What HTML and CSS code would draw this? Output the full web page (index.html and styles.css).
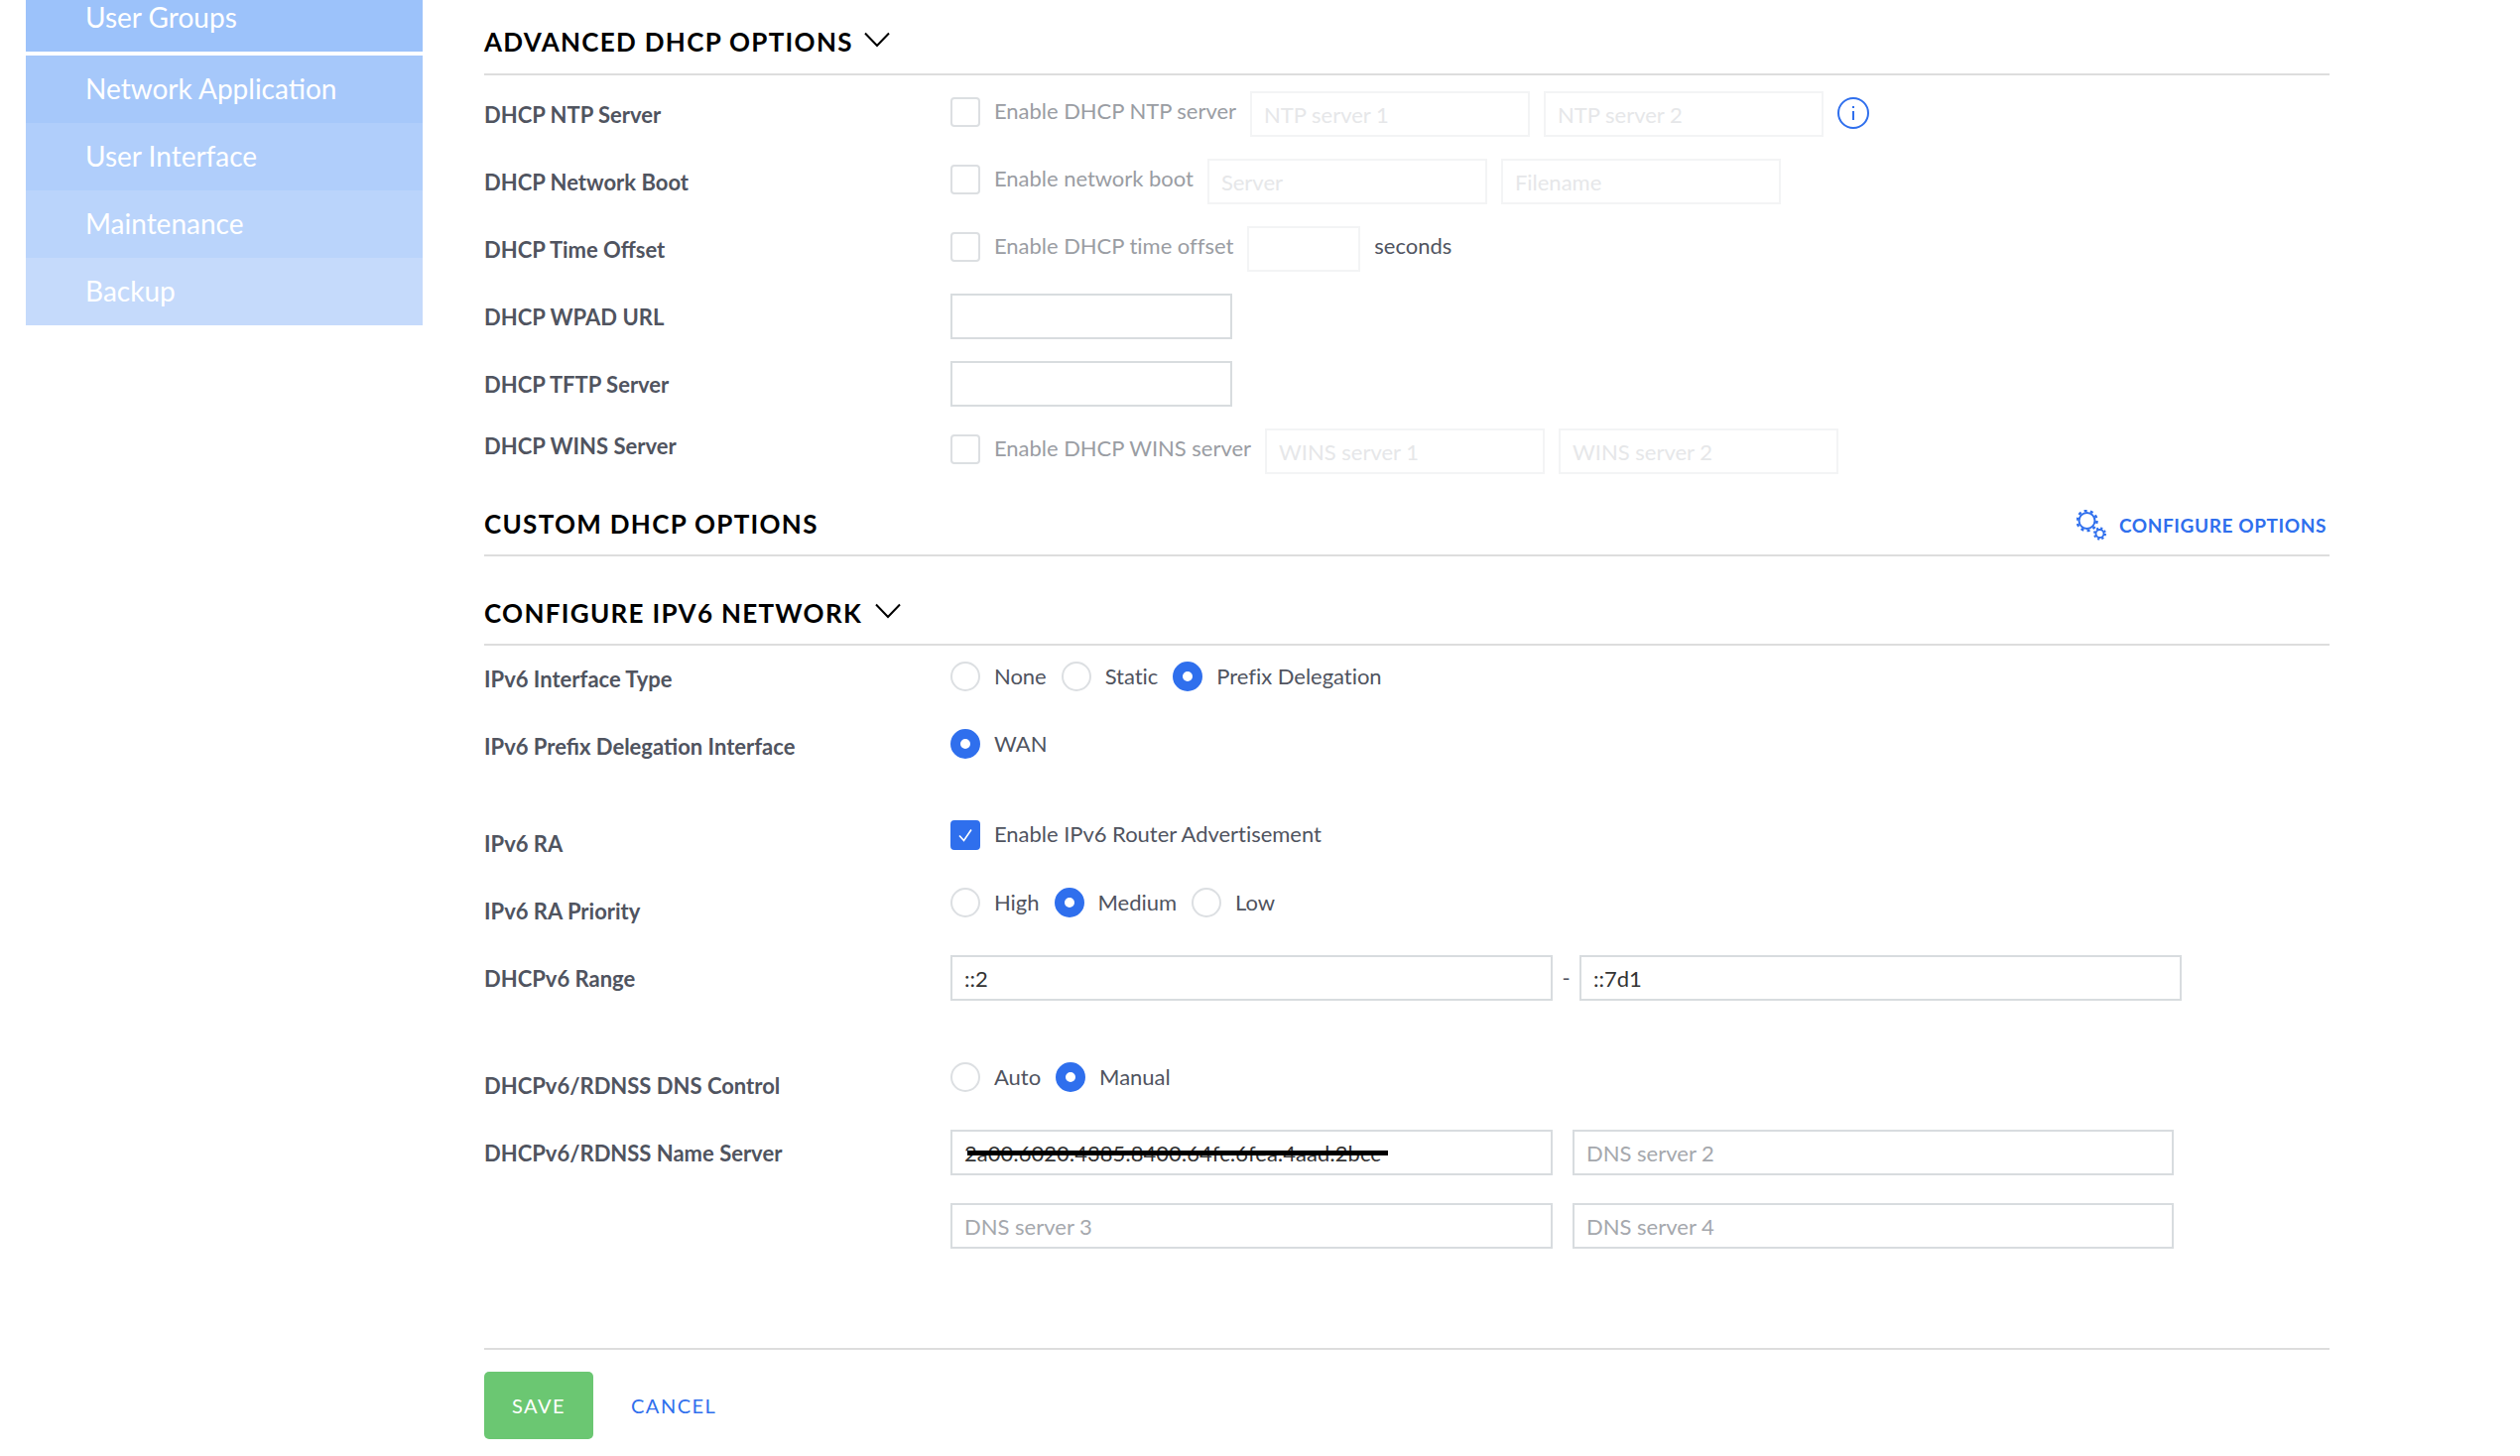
FILE: index.html
```html
<!DOCTYPE html>
<html lang="en">

<head>
    <meta charset="UTF-8" />
    <title>Network Settings</title>
    <link rel="stylesheet" href="styles.css">
</head>

<body>
    <div class="page">
        <nav class="sidebar">
            <a class="nav-item nav-first">User Groups</a>
            <a class="nav-item nav-2">Network Application</a>
            <a class="nav-item nav-3">User Interface</a>
            <a class="nav-item nav-4">Maintenance</a>
            <a class="nav-item nav-5">Backup</a>
        </nav>

        <main class="content">
            <!-- Advanced DHCP -->
            <div class="section-head head-advanced">
                <h2>ADVANCED DHCP OPTIONS</h2>
                <svg class="chevron" viewBox="0 0 26 16"><path d="M1 1.5 13 14 25 1.5" /></svg>
            </div>

            <div class="row">
                <div class="row-label">DHCP NTP Server</div>
                <div class="controls">
                    <label class="option off"><span class="check"></span>Enable DHCP NTP server</label>
                    <input class="field field-sm faded" placeholder="NTP server 1">
                    <input class="field field-sm faded" placeholder="NTP server 2">
                    <svg class="info" viewBox="0 0 32 32">
                        <circle cx="16" cy="16" r="15" />
                        <path d="M16 14v9M16 9v2" />
                    </svg>
                </div>
            </div>
            <div class="row">
                <div class="row-label">DHCP Network Boot</div>
                <div class="controls">
                    <label class="option off"><span class="check"></span>Enable network boot</label>
                    <input class="field field-sm faded" placeholder="Server">
                    <input class="field field-sm faded" placeholder="Filename">
                </div>
            </div>
            <div class="row">
                <div class="row-label">DHCP Time Offset</div>
                <div class="controls">
                    <label class="option off"><span class="check"></span>Enable DHCP time offset</label>
                    <input class="field field-xs faded">
                    <span class="unit">seconds</span>
                </div>
            </div>
            <div class="row">
                <div class="row-label">DHCP WPAD URL</div>
                <div class="controls"><input class="field field-url"></div>
            </div>
            <div class="row">
                <div class="row-label">DHCP TFTP Server</div>
                <div class="controls"><input class="field field-url"></div>
            </div>
            <div class="row row-wins">
                <div class="row-label label-up">DHCP WINS Server</div>
                <div class="controls">
                    <label class="option off"><span class="check"></span>Enable DHCP WINS server</label>
                    <input class="field field-sm faded" placeholder="WINS server 1">
                    <input class="field field-sm faded" placeholder="WINS server 2">
                </div>
            </div>

            <!-- Custom DHCP -->
            <div class="section-head head-custom">
                <h2>CUSTOM DHCP OPTIONS</h2>
                <a class="configure">
                    <svg class="gears" viewBox="0 0 32 32">
                        <circle class="gear-ring" cx="10.5" cy="11" r="8" />
                        <circle class="gear-teeth" cx="10.5" cy="11" r="10" />
                        <circle class="gear-ring small" cx="23.5" cy="24" r="4" />
                        <circle class="gear-teeth small" cx="23.5" cy="24" r="5.5" />
                    </svg>
                    CONFIGURE OPTIONS
                </a>
            </div>

            <!-- IPv6 -->
            <div class="section-head head-ipv6">
                <h2>CONFIGURE IPV6 NETWORK</h2>
                <svg class="chevron" viewBox="0 0 26 16"><path d="M1 1.5 13 14 25 1.5" /></svg>
            </div>

            <div class="row">
                <div class="row-label">IPv6 Interface Type</div>
                <div class="controls controls-radio">
                    <label class="option"><span class="radio"></span>None</label>
                    <label class="option"><span class="radio"></span>Static</label>
                    <label class="option"><span class="radio on"></span>Prefix Delegation</label>
                </div>
            </div>
            <div class="row row-92">
                <div class="row-label">IPv6 Prefix Delegation Interface</div>
                <div class="controls controls-radio">
                    <label class="option"><span class="radio on"></span>WAN</label>
                </div>
            </div>
            <div class="row">
                <div class="row-label label-down">IPv6 RA</div>
                <div class="controls">
                    <label class="option"><span class="check on"><svg viewBox="0 0 30 30"><path d="M9 15.5l4.5 5L21 9.5" /></svg></span>Enable IPv6 Router Advertisement</label>
                </div>
            </div>
            <div class="row row-74">
                <div class="row-label label-down">IPv6 RA Priority</div>
                <div class="controls controls-radio">
                    <label class="option"><span class="radio"></span>High</label>
                    <label class="option"><span class="radio on"></span>Medium</label>
                    <label class="option"><span class="radio"></span>Low</label>
                </div>
            </div>
            <div class="row row-102">
                <div class="row-label">DHCPv6 Range</div>
                <div class="controls controls-range">
                    <input class="field field-lg" value="::2">
                    <span class="dash">-</span>
                    <input class="field field-lg" value="::7d1">
                </div>
            </div>
            <div class="row row-74">
                <div class="row-label label-down">DHCPv6/RDNSS DNS Control</div>
                <div class="controls controls-radio">
                    <label class="option"><span class="radio"></span>Auto</label>
                    <label class="option"><span class="radio on"></span>Manual</label>
                </div>
            </div>
            <div class="row row-74">
                <div class="row-label">DHCPv6/RDNSS Name Server</div>
                <div class="controls controls-dns">
                    <div class="redacted">
                        <input class="field field-lg" value="2a00:6020:4385:8400:64fc:6fea:4aad:2bcc">
                        <span class="redact-line"></span>
                    </div>
                    <input class="field field-dns" placeholder="DNS server 2">
                </div>
            </div>
            <div class="row">
                <div class="row-label"></div>
                <div class="controls controls-dns">
                    <input class="field field-lg" placeholder="DNS server 3">
                    <input class="field field-dns" placeholder="DNS server 4">
                </div>
            </div>

            <div class="form-actions">
                <button class="btn-save">SAVE</button>
                <a class="btn-cancel">CANCEL</a>
            </div>
        </main>
    </div>
</body>

</html>
```
FILE: styles.css
```css
html,
body {
    margin: 0;
    padding: 0;
    height: 1468px;
    overflow: hidden;
    background: #fff;
    font-family: 'Lato', sans-serif;
    color: #50545f;
}

.page {
    display: flex;
    align-items: flex-start;
    gap: 62px;
    padding-left: 26px;
}

/* Sidebar */
.sidebar {
    width: 400px;
    flex-shrink: 0;
    margin-top: -16px;
}

.nav-item {
    display: block;
    height: 68px;
    line-height: 67px;
    padding-left: 60px;
    font-size: 28px;
    font-weight: 400;
    color: #fff;
}

.nav-first {
    background: #9cc2fa;
    margin-bottom: 4px;
}

.nav-2 {
    background: #a6c8fa;
}

.nav-3 {
    background: #b0cefb;
}

.nav-4 {
    background: #bad4fb;
}

.nav-5 {
    background: #c5dafb;
}

/* Main */
.content {
    width: 1860px;
}

.section-head {
    display: flex;
    align-items: center;
    gap: 11px;
    border-bottom: 2px solid #ddd;
    box-sizing: border-box;
}

.section-head h2 {
    margin: 0;
    font-size: 26px;
    font-weight: 700;
    letter-spacing: 1.3px;
    color: #000;
}

.head-advanced {
    height: 76px;
    padding-top: 10px;
    margin-bottom: 16px;
}

.head-custom {
    height: 63px;
    justify-content: space-between;
    padding-top: 2px;
}

.head-custom h2 {
    margin-bottom: 3px;
}

.head-ipv6 {
    height: 90px;
    padding-top: 26px;
    margin-bottom: 10px;
}

.head-ipv6 .chevron {
    margin-left: 2px;
}

.chevron {
    width: 26px;
    height: 16px;
    margin-top: -4px;
    fill: none;
    stroke: #000;
    stroke-width: 2;
}

.configure {
    display: flex;
    align-items: center;
    gap: 11px;
    padding-right: 3px;
    font-size: 19px;
    font-weight: 700;
    letter-spacing: 0.6px;
    color: #2f6fed;
}

.gears {
    width: 32px;
    height: 32px;
    fill: none;
    stroke: #2f6fed;
}

.gear-ring {
    stroke-width: 2;
}

.gear-teeth {
    stroke-width: 2.5;
    stroke-dasharray: 3 3.28;
}

.gear-ring.small {
    stroke-width: 1.8;
}

.gear-teeth.small {
    stroke-width: 2;
    stroke-dasharray: 2.2 2.12;
}

.row {
    display: flex;
    align-items: flex-start;
    height: 68px;
}

.row-74 {
    height: 74px;
}

.row-92 {
    height: 92px;
}

.row-102 {
    height: 102px;
}

.row-wins {
    height: 66px;
}

.row-label {
    width: 470px;
    flex-shrink: 0;
    height: 46px;
    line-height: 48px;
    font-size: 22px;
    font-weight: 700;
    color: #50545f;
}

.label-up {
    margin-top: -6px;
}

.label-down {
    margin-top: 6px;
}

.controls {
    display: flex;
    align-items: flex-start;
    gap: 14px;
}

.controls-radio {
    gap: 15px;
}

.controls-radio .option {
    line-height: 30px;
}

.controls-range {
    gap: 0;
}

.controls-dns {
    gap: 20px;
}

.option {
    display: flex;
    align-items: flex-start;
    gap: 14px;
    height: 30px;
    margin-top: 6px;
    line-height: 28px;
    font-size: 22px;
    letter-spacing: -0.03px;
    color: #50545f;
    white-space: nowrap;
}

.option.off {
    color: #9a9da3;
}

.check {
    display: block;
    box-sizing: border-box;
    width: 30px;
    height: 30px;
    border: 2px solid #dcdfe2;
    border-radius: 4px;
}

.check.on {
    background: #2f6fed;
    border-color: #2f6fed;
}

.check svg {
    display: block;
    width: 30px;
    height: 30px;
    margin: -2px;
    fill: none;
    stroke: #fff;
    stroke-width: 1.6;
}

.radio {
    display: block;
    box-sizing: border-box;
    width: 30px;
    height: 30px;
    border: 2px solid #dcdfe2;
    border-radius: 50%;
}

.radio.on {
    border: 10px solid #2f6fed;
    background: #fff;
}

.field {
    box-sizing: border-box;
    height: 46px;
    margin: 0;
    padding: 1px 12px 0;
    border: 2px solid #d8dcdf;
    border-radius: 0;
    outline: none;
    background: #fff;
    font-family: 'Lato', sans-serif;
    font-size: 22px;
    color: #333;
}

.field::placeholder {
    color: #a5a8ad;
    opacity: 1;
}

.field.faded {
    border-color: #f3f4f5;
}

.field.faded::placeholder {
    color: #e6e7e9;
}

.field-sm {
    width: 282px;
}

.field-xs {
    width: 114px;
}

.field-url {
    width: 284px;
}

.field-lg {
    width: 607px;
}

.field-dns {
    width: 606px;
}

.unit {
    line-height: 28px;
    margin-top: 6px;
    font-size: 22px;
    color: #50545f;
}

.info {
    width: 32px;
    height: 32px;
    margin-top: 6px;
    fill: none;
    stroke: #2f6fed;
    stroke-width: 2;
}

.dash {
    width: 27px;
    line-height: 46px;
    text-align: center;
    font-size: 22px;
}

.redacted {
    position: relative;
}

.redact-line {
    position: absolute;
    left: 17px;
    top: 21px;
    width: 424px;
    height: 5px;
    background: #000;
}

.form-actions {
    display: flex;
    align-items: center;
    gap: 38px;
    margin-top: 78px;
    padding-top: 22px;
    border-top: 2px solid #ddd;
}

.btn-save {
    width: 110px;
    height: 68px;
    padding: 0;
    border: none;
    border-radius: 5px;
    background: #6bc772;
    font-family: 'Lato', sans-serif;
    font-size: 20px;
    letter-spacing: 1.5px;
    color: #fff;
}

.btn-cancel {
    font-size: 20px;
    letter-spacing: 1.5px;
    color: #2f6fed;
}
```
